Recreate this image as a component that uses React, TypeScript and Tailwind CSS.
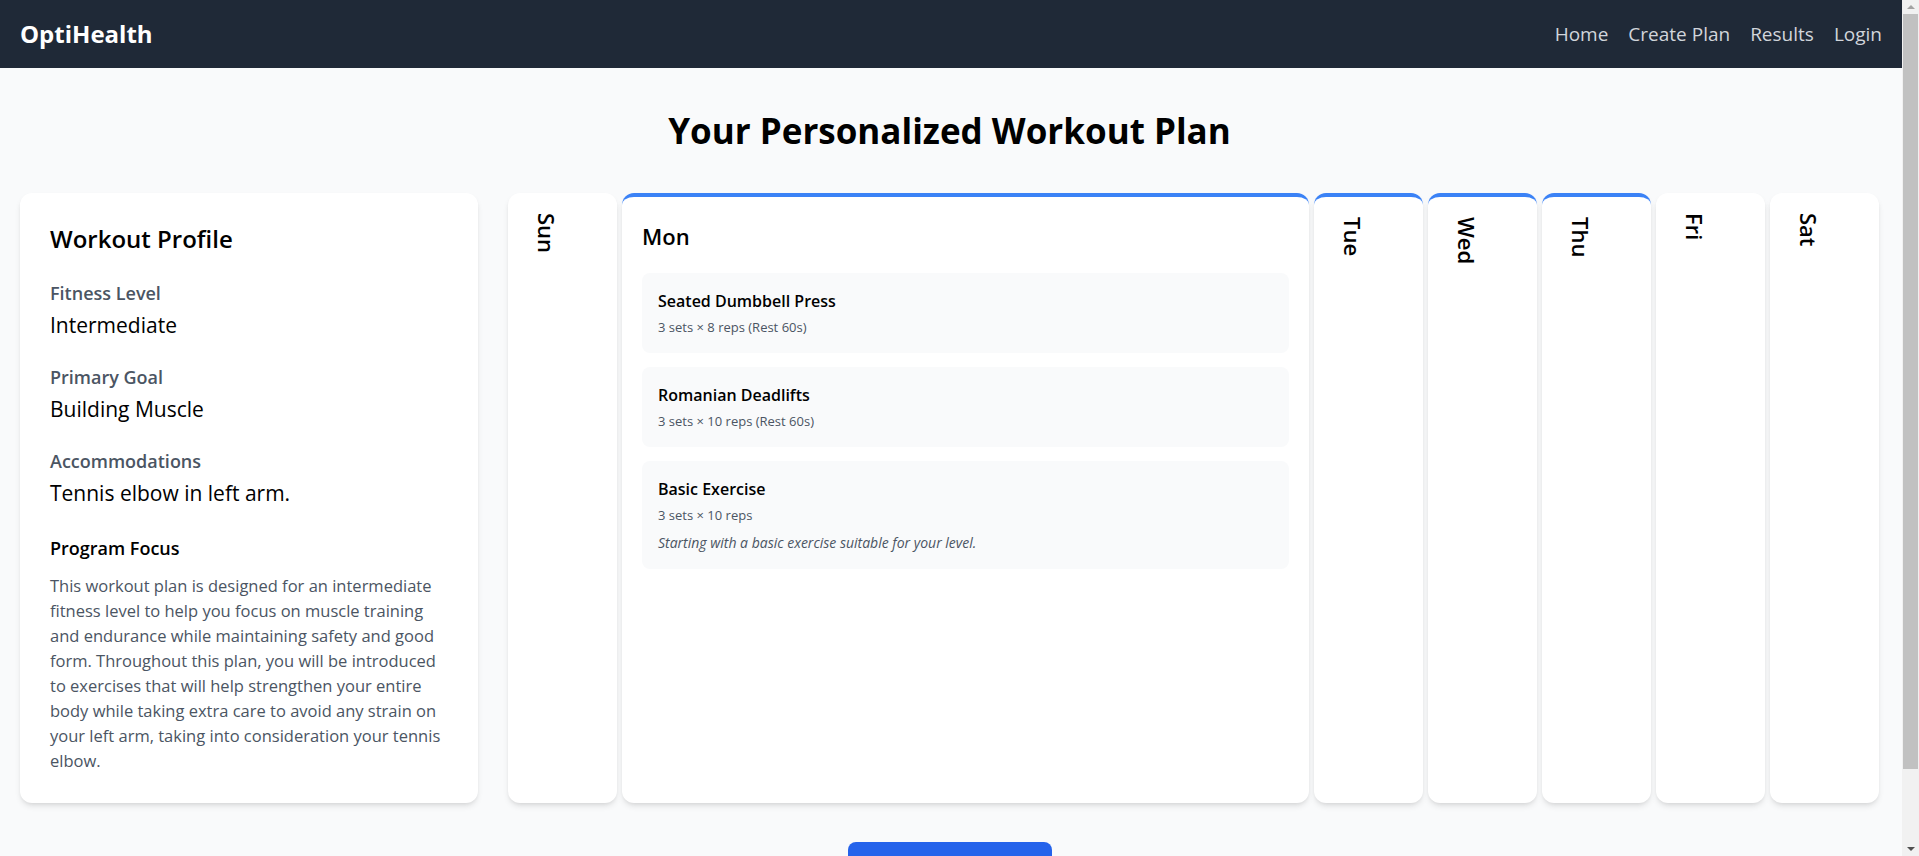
import React from "react";

type Exercise = {
  name: string;
  detail: string;
  note?: string;
};

type Day = {
  label: string;
  active: boolean;
  exercises: Exercise[];
};

const days: Day[] = [
  { label: "Sun", active: false, exercises: [] },
  {
    label: "Mon",
    active: true,
    exercises: [
      { name: "Seated Dumbbell Press", detail: "3 sets × 8 reps (Rest 60s)" },
      { name: "Romanian Deadlifts", detail: "3 sets × 10 reps (Rest 60s)" },
      {
        name: "Basic Exercise",
        detail: "3 sets × 10 reps",
        note: "Starting with a basic exercise suitable for your level.",
      },
    ],
  },
  { label: "Tue", active: true, exercises: [{ name: "Push-ups", detail: "3 sets × 12 reps" }] },
  { label: "Wed", active: true, exercises: [{ name: "Goblet Squats", detail: "3 sets × 10 reps" }] },
  { label: "Thu", active: true, exercises: [{ name: "Plank", detail: "3 sets × 30s" }] },
  { label: "Fri", active: false, exercises: [] },
  { label: "Sat", active: false, exercises: [] },
];

const profile = [
  { label: "Fitness Level", value: "Intermediate" },
  { label: "Primary Goal", value: "Building Muscle" },
  { label: "Accommodations", value: "Tennis elbow in left arm." },
];

const selectedDay = "Mon";

function DayColumn({ day }: { day: Day }) {
  const expanded = day.label === selectedDay;
  const border = day.active ? "border-t-4 border-[#3b82f6]" : "";

  if (!expanded) {
    return (
      <div className={`w-[109px] shrink-0 bg-white rounded-xl shadow-md pt-5 pl-6 ${border}`}>
        <h3 className="[writing-mode:vertical-rl] text-[22px] leading-[30px] font-semibold text-black">
          {day.label}
        </h3>
      </div>
    );
  }

  return (
    <div className={`flex-1 min-w-0 bg-white rounded-xl shadow-md pt-6 px-5 pb-5 ${border}`}>
      <h3 className="text-[22px] leading-[30px] font-semibold text-black mb-[22px]">{day.label}</h3>
      <div className="space-y-[14px]">
        {day.exercises.map((ex) => (
          <div key={ex.name} className="bg-[#f9fafb] rounded-lg p-4">
            <div className="text-base leading-6 font-semibold text-black">{ex.name}</div>
            <div className="text-[13px] leading-5 text-[#4b5563] mt-1">{ex.detail}</div>
            {ex.note && <div className="text-sm leading-5 italic text-[#4b5563] mt-2">{ex.note}</div>}
          </div>
        ))}
      </div>
    </div>
  );
}

// window scrollbar as it shows in the screenshot
function ScrollBar() {
  return (
    <div className="w-[17px] shrink-0 bg-[#f1f1f1] flex flex-col items-center">
      <div className="h-[14px] flex items-center justify-center">
        <div className="w-0 h-0 border-x-[4px] border-x-transparent border-b-[4px] border-b-[#a3a3a3]" />
      </div>
      <div className="w-[15px] h-[755px] bg-[#c1c1c1]" />
      <div className="flex-1" />
      <div className="h-[14px] flex items-center justify-center">
        <div className="w-0 h-0 border-x-[4px] border-x-transparent border-t-[4px] border-t-[#505050]" />
      </div>
    </div>
  );
}

export default function App() {
  return (
    <div className="flex h-screen overflow-hidden font-['Open_Sans',sans-serif]">
      <div className="flex-1 min-w-0 overflow-y-auto bg-[#f9fafb]">
        {/* Navbar */}
        <nav className="h-[68px] bg-[#1f2937] flex items-center justify-between px-5">
          <div className="text-2xl font-bold text-white">OptiHealth</div>
          <div className="flex items-center gap-5 text-[19px] text-[#d1d5db]">
            <a href="#">Home</a>
            <a href="#">Create Plan</a>
            <a href="#">Results</a>
            <a href="#">Login</a>
          </div>
        </nav>

        <main className="pl-5 pr-[23px] pt-[43px] pb-12">
          <h1 className="text-[35px] leading-10 font-bold text-black text-center mb-[42px]">
            Your Personalized Workout Plan
          </h1>

          <div className="flex items-stretch gap-[30px]">
            {/* Profile card */}
            <div className="w-[458px] shrink-0 bg-white rounded-xl shadow-md p-[30px]">
              <h2 className="text-2xl leading-8 font-semibold text-black mb-6">Workout Profile</h2>
              {profile.map((p, i) => (
                <div key={p.label} className={i === profile.length - 1 ? "mb-[27px]" : "mb-6"}>
                  <div className="text-lg leading-7 font-semibold text-[#4b5563] mb-1">{p.label}</div>
                  <div className="text-[21px] leading-7 text-black">{p.value}</div>
                </div>
              ))}
              <h3 className="text-lg leading-7 font-semibold text-black mb-[11px]">Program Focus</h3>
              <p className="text-[16.5px] leading-[25px] text-[#4b5563]">
                This workout plan is designed for an intermediate fitness level to help you focus on
                muscle training and endurance while maintaining safety and good form. Throughout this
                plan, you will be introduced to exercises that will help strengthen your entire body
                while taking extra care to avoid any strain on your left arm, taking into
                consideration your tennis elbow.
              </p>
            </div>

            {/* Week */}
            <div className="flex-1 min-w-0 flex items-stretch gap-[5px]">
              {days.map((d) => (
                <DayColumn key={d.label} day={d} />
              ))}
            </div>
          </div>

          <div className="flex justify-center mt-[39px]">
            <button className="w-[204px] bg-[#2563eb] text-white text-base font-semibold rounded-lg py-3">
              Save Plan
            </button>
          </div>
        </main>
      </div>
      <ScrollBar />
    </div>
  );
}
